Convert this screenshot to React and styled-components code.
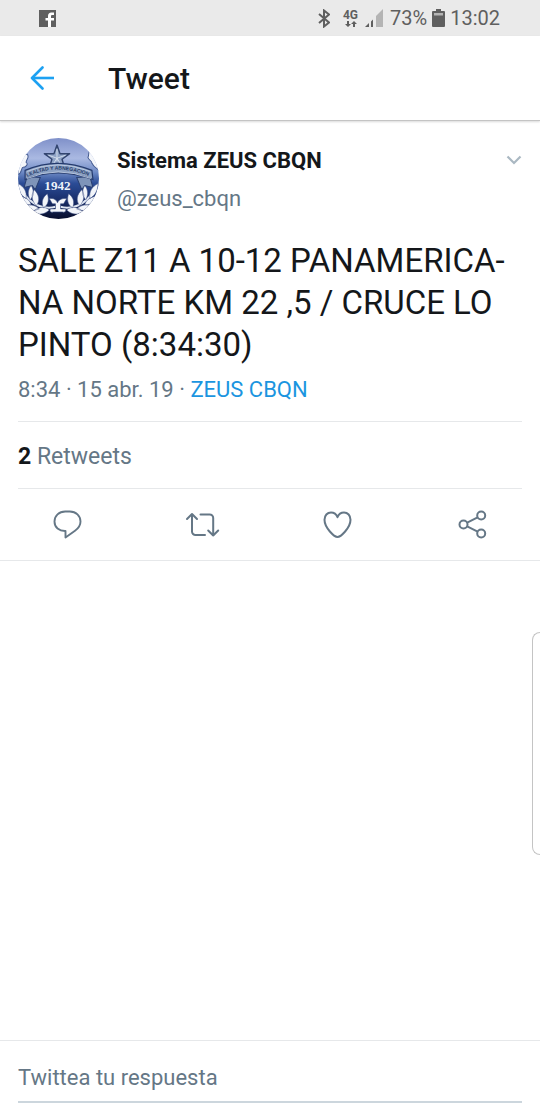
/**
 *
 * TweetPage
 *
 */

import React from 'react';
import styled, { createGlobalStyle } from 'styled-components';

const GlobalStyle = createGlobalStyle`
  * {
    box-sizing: border-box;
  }
  body {
    margin: 0;
    background: #fff;
    color: #14171a;
    font-family: Roboto, 'Liberation Sans', sans-serif;
  }
  svg {
    display: block;
  }
`;

const Page = styled.div`
  display: flex;
  flex-direction: column;
  min-height: 100vh;
`;

const StatusBar = styled.div`
  display: flex;
  justify-content: space-between;
  align-items: center;
  height: 36px;
  padding: 0 40px 0 39px;
  background: #eaeaea;
  color: #5f5f5f;
  font-size: 20px;
  line-height: 24px;
`;

const StatusGroup = styled.div`
  display: flex;
  align-items: center;
`;

const StatusText = styled.span`
  margin-left: ${props => props.$gap}px;
`;

const Network = styled.div`
  display: flex;
  flex-direction: column;
  align-items: center;
  margin: 0 7px 0 13px;
  font-size: 12px;
  font-weight: 700;
  line-height: 11px;
`;

const Header = styled.header`
  display: flex;
  align-items: center;
  height: 85px;
  padding: 0 28px;
  background: #fff;
  border-bottom: 1px solid #c4c4c4;
  box-shadow: 0 1px 2px rgba(0, 0, 0, 0.15);
`;

const IconButton = styled.button`
  display: flex;
  align-items: center;
  justify-content: center;
  padding: 0;
  border: 0;
  background: none;
  color: ${props => props.$color || '#657786'};
  cursor: pointer;
`;

const Title = styled.h1`
  margin: 0 0 0 52px;
  padding-top: 2px;
  font-size: 30px;
  font-weight: 500;
  line-height: 36px;
`;

const Tweet = styled.article`
  padding: 17px 18px 0;
`;

const Author = styled.div`
  display: flex;
  align-items: flex-start;
`;

const Names = styled.div`
  flex: 1;
  margin-left: 18px;
  padding-top: 8px;
`;

const Name = styled.div`
  font-size: 22px;
  font-weight: 700;
  line-height: 30px;
`;

const Handle = styled.div`
  margin-top: 8px;
  color: #657786;
  font-size: 22px;
  line-height: 30px;
`;

const MenuButton = styled(IconButton)`
  padding-top: 16px;
`;

const TweetText = styled.p`
  margin: 21px 0 0;
  font-size: 33px;
  line-height: 42px;
`;

const Meta = styled.div`
  padding: 9px 0 16px;
  border-bottom: 1px solid #e6e8ea;
  color: #657786;
  font-size: 22px;
  line-height: 30px;
`;

const SourceLink = styled.a`
  color: #1b95e0;
  text-decoration: none;
`;

const Stats = styled.div`
  padding: 20px 0 16px;
  border-bottom: 1px solid #e6e8ea;
  color: #657786;
  font-size: 23px;
  line-height: 30px;

  strong {
    color: #14171a;
  }
`;

const Actions = styled.div`
  display: grid;
  grid-template-columns: repeat(4, 1fr);
  height: 72px;
  border-bottom: 1px solid #e6e8ea;
`;

const Conversation = styled.div`
  flex: 1;
`;

const Reply = styled.form`
  padding: 12px 18px 7px;
  border-top: 1px solid #e6e8ea;
`;

const ReplyInput = styled.input`
  display: block;
  width: 100%;
  height: 50px;
  padding: 0;
  border: 0;
  border-bottom: 2px solid #ccd6dd;
  background: none;
  color: #14171a;
  font-family: inherit;
  font-size: 22px;
  outline: none;

  &::placeholder {
    color: #657786;
    opacity: 1;
  }
`;

// handle of the edge panel, lies over the page
const EdgePanel = styled.div`
  position: fixed;
  top: 632px;
  right: 0;
  width: 8px;
  height: 223px;
  border: 1px solid #c4c4c4;
  border-right: 0;
  border-radius: 8px 0 0 8px;
  background: #fff;
`;

const FacebookIcon = () => (
  <svg width="17" height="17" viewBox="0 0 17 17">
    <path fill="#5f5f5f" d="M0 0h17v17H0z" />
    <path fill="#fff" d="M9 17v-6.500H6.500V8H9V6c0-2.200 1.300-3.400 3.400-3.400H15V5h-1.500c-1.100 0-1.500.4-1.500 1.200V8h3v2.500h-3V17z" />
  </svg>
);

const BluetoothIcon = () => (
  <svg width="12" height="19" viewBox="0 0 12 19" fill="none" stroke="#5f5f5f" strokeWidth="2">
    <path d="M1 5l10 8.500L6 17.500v-16l5 4L1 14" />
  </svg>
);

const DataArrows = () => (
  <svg width="12" height="6" viewBox="0 0 12 6" fill="#5f5f5f">
    <path d="M2 0h2v3h2L3 6 0 3h2zM8 6h2V3h2L9 0 6 3h2z" />
  </svg>
);

const SignalIcon = () => (
  <svg width="18" height="18" viewBox="0 0 18 18">
    <path fill="#5f5f5f" d="M0 18l4-4v4zM6 12.500l2-2V18H6z" />
    <path fill="#b4b4b4" d="M11 7l7-7v18h-7z" />
  </svg>
);

const BatteryIcon = () => (
  <svg width="13" height="18" viewBox="0 0 13 18">
    <path fill="#5f5f5f" d="M4 0h5v2h3a1 1 0 0 1 1 1v14a1 1 0 0 1-1 1H1a1 1 0 0 1-1-1V3a1 1 0 0 1 1-1h3z" />
    <path fill="#b4b4b4" d="M2 4h9v2.500H2z" />
  </svg>
);

const BackIcon = () => (
  <svg width="28" height="24" viewBox="0 0 28 24" fill="none" stroke="currentColor" strokeWidth="2.600" strokeLinejoin="round">
    <path strokeLinecap="round" d="M14.500 1.500L4 12l10.500 10.500" />
    <path d="M4 12h22" />
  </svg>
);

const ChevronIcon = () => (
  <svg width="16" height="12" viewBox="0 0 16 12" fill="none" stroke="#aab8c2" strokeWidth="2.200">
    <path d="M1.500 2.500L8 9l6.500-6.500" />
  </svg>
);

const ReplyIcon = () => (
  <svg width="30" height="30" viewBox="0 0 30 30" fill="none" stroke="currentColor" strokeWidth="1.900" strokeLinejoin="round">
    <path d="M12.200 1.500h4.600C23 1.500 27.500 5.700 27.500 11.500c0 4-2 6.800-5.500 9.200L12.500 27.500V21C6 21.200 1.500 17.500 1.500 11.500 1.500 5.700 6 1.500 12.200 1.500z" />
  </svg>
);

const RetweetIcon = () => (
  <svg width="36" height="30" viewBox="0 0 36 30" fill="none" stroke="currentColor" strokeWidth="2" strokeLinecap="round" strokeLinejoin="round">
    <path d="M2 9l5-5 5 5M7 4v17.500a3.500 3.500 0 0 0 3.500 3.500H20M15.500 4.500h9.200A3.500 3.500 0 0 1 28.200 8v17.500M23.200 20.500l5 5 5-5" />
  </svg>
);

const HeartIcon = () => (
  <svg width="30" height="30" viewBox="0 0 30 30" fill="none" stroke="currentColor" strokeWidth="2" strokeLinejoin="round">
    <path d="M14.500 27C11.500 27 1.500 18 1.500 9.800 1.500 5.500 4.300 2.500 8 2.500c3 0 5.300 1.600 6.500 4.700 1.200-3.100 3.500-4.700 6.500-4.700 3.700 0 6.500 3 6.500 7.300C27.500 18 17.500 27 14.500 27z" />
  </svg>
);

const ShareIcon = () => (
  <svg width="30" height="30" viewBox="0 0 30 30" fill="none" stroke="currentColor" strokeWidth="2">
    <circle cx="5.500" cy="14.500" r="4" />
    <circle cx="23.200" cy="5.500" r="4" />
    <circle cx="23.200" cy="23.500" r="4" />
    <path d="M9.200 12.600l10.400-5.300M9.200 16.400l10.400 5.300" />
  </svg>
);

const Laurel = () => (
  <g>
    <path stroke="#dfe6f2" strokeWidth="2" fill="none" d="M37 68C26 71 13 66 5 54" />
    <g fill="#f2f5fa" stroke="#3f5285" strokeWidth=".5">
      <path d="M8 60C2 56 0 51 0 45c6 3 9 8 8 15zM13 66c-7 0-11-3-13-9 7 1 12 4 13 9zM12 61c-3-6-2-10 1-14 3 5 3 10-1 14zM18 67c-5-6-5-11-2-16 5 5 6 11 2 16zM21 70c-7 3-12 2-17-3 7-2 13-1 17 3zM25 69c-2-6-1-10 4-14 2 6 1 11-4 14zM31 71c-5 5-11 5-16 2 4-5 11-6 16-2z" />
    </g>
  </g>
);

const Avatar = () => (
  <svg width="81" height="81" viewBox="0 0 80 80" role="img" aria-label="Sistema ZEUS CBQN">
    <defs>
      <linearGradient id="sky" x1="0" y1="0" x2="0" y2="1">
        <stop offset="0" stopColor="#7f90c9" />
        <stop offset=".25" stopColor="#aab9e2" />
        <stop offset=".42" stopColor="#6f8bc6" />
        <stop offset=".56" stopColor="#2b4c96" />
        <stop offset=".76" stopColor="#192f6c" />
        <stop offset="1" stopColor="#070d2c" />
      </linearGradient>
      <clipPath id="round">
        <circle cx="40" cy="40" r="40" />
      </clipPath>
      <path id="motto" d="M9 38.500Q39 24 72 38.500" />
    </defs>
    <g clipPath="url(#round)">
      <path fill="url(#sky)" d="M0 0h80v80H0z" />
      <path fill="#f4f6fa" stroke="#435a91" strokeWidth="1" d="M0 16h9c3 3-1 5-1 8 3 2-1 5-3 5s-1 6-5 7zM80 11h-8c-4 3-1 6-3 8 1 4 4 3 4 6 2 4 5 5 7 7z" />
      <path fill="#8fa3c6" stroke="#33456f" strokeWidth="1.400" strokeLinejoin="round" d="M38.500 7l3 8.500h9.500l-7.500 5.500 2.700 9-7.700-5-7.700 5 2.700-9-7.500-5.500h9.500z" />
      <path fill="none" stroke="#dfe7f4" strokeWidth=".8" d="M38.500 11v12M30 17l8.500 3 8.500-3M34 27l4.500-7 4.500 7" />
      <path fill="#7e94b9" stroke="#293f71" strokeWidth="1" d="M9 38l-3 11 8-2 3 4 5-12zM71 38l3 11-8-2-3 4-5-12z" />
      <path fill="#8ca1c3" stroke="#253b6e" strokeWidth="1.200" d="M7 32Q39 18 73 32l1 9Q39 28 7 41z" />
      <path fill="none" stroke="#c8d5e9" strokeWidth=".8" d="M9 33Q39 20 71 33M9 40Q39 27 72 40" />
      <text fontFamily="Liberation Sans, sans-serif" fontSize="5" fontWeight="700" fill="#263c6b">
        <textPath href="#motto">LEALTAD Y ABNEGACION</textPath>
      </text>
      <text x="39" y="51" textAnchor="middle" fontFamily="Liberation Serif, serif" fontSize="13" fontWeight="700" fill="#eef3fb">1942</text>
      <Laurel />
      <g transform="translate(79 0) scale(-1 1)">
        <Laurel />
      </g>
      <path fill="#f4f6fa" stroke="#3f5285" strokeWidth=".6" d="M31 60c4-1 7 1 8 4 1-3 5-5 9-4l-3 5h-3v5h5c1 2-1 4-3 3h-9c-3 1-4-1-3-3h5v-5h-3z" />
    </g>
  </svg>
);

const actions = [
  { label: 'Responder', Icon: ReplyIcon },
  { label: 'Retwittear', Icon: RetweetIcon },
  { label: 'Me gusta', Icon: HeartIcon },
  { label: 'Compartir', Icon: ShareIcon },
];

export function TweetPage() {
  return (
    <Page>
      <GlobalStyle />
      <StatusBar>
        <FacebookIcon />
        <StatusGroup>
          <BluetoothIcon />
          <Network>
            4G
            <DataArrows />
          </Network>
          <SignalIcon />
          <StatusText $gap={7}>73%</StatusText>
          <StatusText $gap={5}><BatteryIcon /></StatusText>
          <StatusText $gap={5}>13:02</StatusText>
        </StatusGroup>
      </StatusBar>
      <Header>
        <IconButton type="button" aria-label="Atrás" $color="#1da1f2">
          <BackIcon />
        </IconButton>
        <Title>Tweet</Title>
      </Header>
      <main>
        <Tweet>
          <Author>
            <Avatar />
            <Names>
              <Name>Sistema ZEUS CBQN</Name>
              <Handle>@zeus_cbqn</Handle>
            </Names>
            <MenuButton type="button" aria-label="Más opciones">
              <ChevronIcon />
            </MenuButton>
          </Author>
          <TweetText>
            SALE Z11 A 10-12 PANAMERICA-NA NORTE KM 22 ,5 / CRUCE LO PINTO (8:34:30)
          </TweetText>
          <Meta>
            8:34 · 15 abr. 19 · <SourceLink href="#source">ZEUS CBQN</SourceLink>
          </Meta>
          <Stats>
            <strong>2</strong> Retweets
          </Stats>
        </Tweet>
        <Actions>
          {actions.map(({ label, Icon }) => (
            <IconButton key={label} type="button" aria-label={label}>
              <Icon />
            </IconButton>
          ))}
        </Actions>
      </main>
      <Conversation />
      <Reply>
        <ReplyInput type="text" aria-label="Twittea tu respuesta" placeholder="Twittea tu respuesta" />
      </Reply>
      <EdgePanel />
    </Page>
  );
}

export default TweetPage;
